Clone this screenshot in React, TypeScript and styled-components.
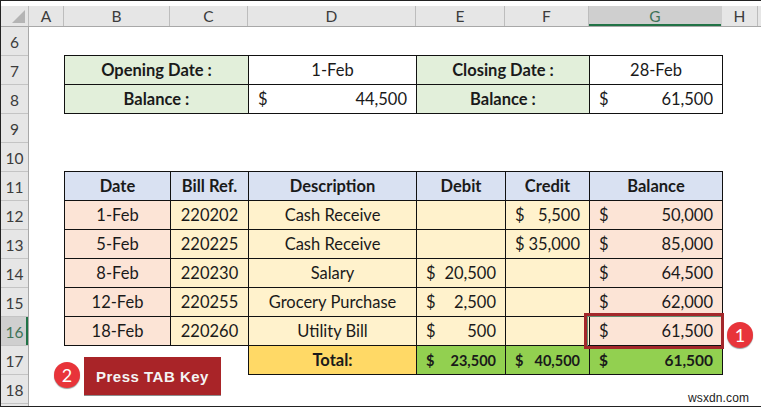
import React from 'react'
import styled, { createGlobalStyle } from 'styled-components'

const GlobalStyle = createGlobalStyle`
  html, body {
    margin: 0;
    padding: 0;
    background: #fff;
  }
`

const COLS = '106px 78px 168px 89px 84px 133px'

const Page = styled.div`
  position: relative;
  width: 761px;
  height: 407px;
  box-sizing: border-box;
  border: 1px solid #222;
  border-right: none;
  overflow: hidden;
  font-family: 'Lato', 'Liberation Sans', sans-serif;
  font-size: 16.5px;
  color: #1a1a1a;
  background: #fff;
`

const TopBar = styled.div`
  display: grid;
  grid-template-columns: 28px 35px ${COLS} 36px 1fr;
  height: 20px;
  margin-top: 5px;
  background: #e6e6e6;
  border-bottom: 1px solid #a8a8a8;
`

const Corner = styled.div`
  position: relative;
  border-right: 1px solid #bdbdbd;
  &::after {
    content: '';
    position: absolute;
    right: 3px;
    bottom: 3px;
    border-style: solid;
    border-width: 0 0 13px 13px;
    border-color: transparent transparent #b4b4b4 transparent;
  }
`

const ColHead = styled.div<{ $active?: boolean }>`
  display: flex;
  align-items: center;
  justify-content: center;
  font-size: 15.5px;
  color: ${p => (p.$active ? '#3f7358' : '#3c3c3c')};
  background: ${p => (p.$active ? '#cfcfcf' : 'transparent')};
  border-right: 1px solid ${p => (p.$active ? '#cfcfcf' : '#bdbdbd')};
  box-shadow: ${p => (p.$active ? 'inset 0 -2px 0 #217346' : 'none')};
`

const Body = styled.div`
  display: flex;
`

const RowRail = styled.div`
  width: 27px;
  flex: none;
  display: flex;
  flex-direction: column;
  background: #e6e6e6;
  border-right: 1px solid #a8a8a8;
`

const RowHead = styled.div<{ $active?: boolean }>`
  height: 29px;
  flex: none;
  box-sizing: border-box;
  display: flex;
  align-items: center;
  justify-content: center;
  padding-top: 2px;
  font-size: 15.5px;
  color: ${p => (p.$active ? '#3f7358' : '#3c3c3c')};
  background: ${p => (p.$active ? '#cfcfcf' : 'transparent')};
  border-bottom: 1px solid #c4c4c4;
  box-shadow: ${p => (p.$active ? 'inset -2px 0 0 #217346' : 'none')};
`

const Sheet = styled.div`
  flex: 1;
  padding: 28px 0 0 35px;
  display: flex;
  flex-direction: column;
  gap: 57px;
`

const Table = styled.div`
  display: grid;
  grid-template-columns: ${COLS};
  grid-auto-rows: 29px;
  width: max-content;
  border-top: 1px solid #111;
  border-left: 1px solid #111;
`

const Cell = styled.div<{ $bg?: string; $bold?: boolean; $span?: number; $size?: number }>`
  box-sizing: border-box;
  grid-column: span ${p => p.$span ?? 1};
  display: flex;
  align-items: center;
  justify-content: center;
  padding: 0 9px;
  background: ${p => p.$bg ?? '#fff'};
  font-size: ${p => p.$size ?? 16.5}px;
  font-weight: ${p => (p.$bold ? 700 : 400)};
  border-right: 1px solid #111;
  border-bottom: 1px solid #111;
`

const Money = styled(Cell)`
  justify-content: space-between;
`

const BlankCorner = styled.div`
  grid-column: span 2;
  margin-left: -1px;
  background: #fff;
  border-right: 1px solid #111;
`

const Highlight = styled.div`
  position: absolute;
  left: 583px;
  top: 312px;
  width: 140px;
  height: 36px;
  box-sizing: border-box;
  border: 3px solid #a3282b;
  box-shadow: inset 1px 1px 0 #5f8f74;
  pointer-events: none;
`

const Badge = styled.div<{ $left: number; $top: number }>`
  position: absolute;
  left: ${p => p.$left}px;
  top: ${p => p.$top}px;
  width: 26px;
  height: 26px;
  border-radius: 50%;
  background: #e8343a;
  color: #fff;
  display: flex;
  align-items: center;
  justify-content: center;
  font-size: 18px;
  box-shadow: 0 1px 1px #9a9a9a;
`

const KeyLabel = styled.div`
  position: absolute;
  left: 83px;
  top: 356px;
  width: 137px;
  height: 38px;
  background: #a92428;
  border-bottom: 1px solid #8d8d8d;
  color: #f4f4f4;
  font-family: 'Liberation Sans', Arial, sans-serif;
  font-weight: 700;
  font-size: 15px;
  letter-spacing: 0.5px;
  display: flex;
  align-items: center;
  justify-content: center;
`

const Watermark = styled.div`
  position: absolute;
  right: 12px;
  bottom: 1px;
  font-family: 'Liberation Sans', Arial, sans-serif;
  font-size: 12px;
  letter-spacing: 0.1px;
  color: #222;
`

const Amount = ({ bg, bold, size, value }: { bg?: string; bold?: boolean; size?: number; value: string }) => (
  <Money $bg={bg} $bold={bold} $size={size}>
    <span>$</span>
    <span>{value}</span>
  </Money>
)

const PEACH = '#fce4d6'
const CREAM = '#fff2cc'
const BLUE = '#d9e1f2'
const MINT = '#e2efda'
const GREEN = '#92d050'
const GOLD = '#ffd966'

const ledger = [
  ['1-Feb', '220202', 'Cash Receive', '', '5,500', '50,000'],
  ['5-Feb', '220225', 'Cash Receive', '', '35,000', '85,000'],
  ['8-Feb', '220230', 'Salary', '20,500', '', '64,500'],
  ['12-Feb', '220255', 'Grocery Purchase', '2,500', '', '62,000'],
  ['18-Feb', '220260', 'Utility Bill', '500', '', '61,500'],
]

const App = () => (
  <Page>
    <GlobalStyle />
    <TopBar>
      <Corner />
      {['A', 'B', 'C', 'D', 'E', 'F'].map(c => (
        <ColHead key={c}>{c}</ColHead>
      ))}
      <ColHead $active>G</ColHead>
      <ColHead>H</ColHead>
    </TopBar>
    <Body>
      <RowRail>
        {[6, 7, 8, 9, 10, 11, 12, 13, 14, 15, 16, 17, 18].map(n => (
          <RowHead key={n} $active={n === 16}>
            {n}
          </RowHead>
        ))}
        <RowHead />
      </RowRail>
      <Sheet>
        <Table>
          <Cell $bg={MINT} $bold $span={2}>Opening Date :</Cell>
          <Cell>1-Feb</Cell>
          <Cell $bg={MINT} $bold $span={2}>Closing Date :</Cell>
          <Cell>28-Feb</Cell>
          <Cell $bg={MINT} $bold $span={2}>Balance :</Cell>
          <Amount value="44,500" />
          <Cell $bg={MINT} $bold $span={2}>Balance :</Cell>
          <Amount value="61,500" />
        </Table>
        <Table>
          {['Date', 'Bill Ref.', 'Description', 'Debit', 'Credit', 'Balance'].map(h => (
            <Cell key={h} $bg={BLUE} $bold>{h}</Cell>
          ))}
          {ledger.map(([date, ref, desc, debit, credit, balance]) => (
            <React.Fragment key={ref}>
              <Cell $bg={PEACH}>{date}</Cell>
              <Cell $bg={CREAM}>{ref}</Cell>
              <Cell $bg={CREAM}>{desc}</Cell>
              {debit ? <Amount bg={CREAM} value={debit} /> : <Cell $bg={CREAM} />}
              {credit ? <Amount bg={CREAM} value={credit} /> : <Cell $bg={CREAM} />}
              <Amount bg={PEACH} value={balance} />
            </React.Fragment>
          ))}
          <BlankCorner />
          <Cell $bg={GOLD} $bold>Total:</Cell>
          <Amount bg={GREEN} bold size={14.5} value="23,500" />
          <Amount bg={GREEN} bold size={14.5} value="40,500" />
          <Amount bg={GREEN} bold size={15.5} value="61,500" />
        </Table>
      </Sheet>
    </Body>
    <Highlight />
    <Badge $left={726} $top={321}>1</Badge>
    <Badge $left={53} $top={361}>2</Badge>
    <KeyLabel>Press TAB Key</KeyLabel>
    <Watermark>wsxdn.com</Watermark>
  </Page>
)

export default App
